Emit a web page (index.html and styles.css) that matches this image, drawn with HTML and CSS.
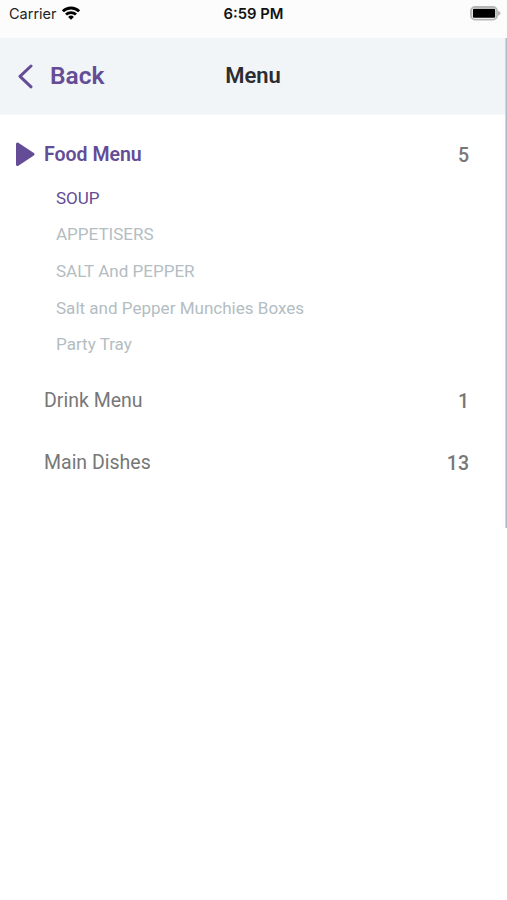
FILE: index.html
```
<!DOCTYPE html>
<html lang="en">
<head>
<meta charset="utf-8">
<title>Menu</title>
<link rel="stylesheet" href="styles.css">
</head>
<body>
<div class="status">
  <div class="carrier"><span>Carrier</span>
    <svg class="wifi" width="18" height="14" viewBox="0 0 18 14"><g fill="none" stroke="#000" stroke-width="2.8"><path d="M.9 5.3a11.6 11.6 0 0 1 16.2 0"/><path d="M4 8.6a7.2 7.2 0 0 1 10 0"/></g><path d="M9 13.8 6.1 10.9a4.2 4.2 0 0 1 5.8 0z"/></svg>
  </div>
  <span class="time">6:59 PM</span>
  <svg class="battery" width="31" height="15" viewBox="0 0 31 15"><rect x="1" y="1" width="26" height="12.6" rx="4" fill="#fff" stroke="#b5b5b5" stroke-width="1.8"/><rect x="2.9" y="2.8" width="22.3" height="9" rx="1.2"/><path d="M28 4.8v5q2.4-.9 2.4-2.5T28 4.8z" fill="#b5b5b5"/></svg>
</div>
<header class="header">
  <a class="back"><svg class="chevron" width="16" height="26" viewBox="0 0 16 26"><path d="M14 3 3 13.3l11 10.5" fill="none" stroke="#644c96" stroke-width="3" stroke-linecap="round" stroke-linejoin="round"/></svg><span>Back</span></a>
  <h1 class="title">Menu</h1>
</header>
<main class="menu">
  <div class="row active">
    <svg class="arrow" width="19" height="26" viewBox="0 0 19 26"><path d="M1.5 3v20.4L17 13.2z" fill="#644c96" stroke="#644c96" stroke-width="3" stroke-linejoin="round"/></svg>
    <span class="name">Food Menu</span><span class="count">5</span>
  </div>
  <ul class="sub">
    <li class="current"><span>SOUP</span></li>
    <li><span>APPETISERS</span></li>
    <li><span>SALT And PEPPER</span></li>
    <li><span>Salt and Pepper Munchies Boxes</span></li>
    <li><span>Party Tray</span></li>
  </ul>
  <div class="row"><span class="name">Drink Menu</span><span class="count">1</span></div>
  <div class="row"><span class="name">Main Dishes</span><span class="count">13</span></div>
</main>
<div class="scrollbar"></div>
</body>
</html>
```
FILE: styles.css
```
* { box-sizing: border-box; }
body {
  margin: 0;
  height: 900px;
  overflow: hidden;
  background: #fff;
  font-family: Roboto, "Liberation Sans", sans-serif;
}
.status {
  display: grid;
  grid-template-columns: 1fr auto 1fr;
  align-items: center;
  height: 38px;
  padding: 0 6px 11px 9px;
  background: #fcfcfc;
  font: 15px/20px Inter, sans-serif;
  color: #111;
}
.carrier { display: flex; align-items: center; gap: 5px; font-size: 14.5px; color: #222; }
.wifi { margin-top: -2px; }
.time { margin-left: -3px; font-size: 14.8px; font-weight: 600; }
.battery { justify-self: end; }
.header {
  display: grid;
  grid-template-columns: 1fr auto 1fr;
  align-items: center;
  height: 77px;
  padding: 0 18px 0 17px;
  background: #f2f5f7;
  border-bottom: 1px solid #f8f9fa;
}
.back {
  display: flex;
  align-items: center;
  gap: 17px;
  color: #644c96;
  font-size: 24.5px;
  line-height: 28px;
  font-weight: 600;
}
.title { margin: 0; font-size: 22px; line-height: 26px; font-weight: 600; color: #2b2d32; }
.menu { padding: 8px 38px 0 16px; }
.row {
  display: flex;
  align-items: center;
  height: 62.5px;
  padding-left: 28px;
  font-size: 19.5px;
  color: #777;
}
.row.active { height: 56.5px; padding: 6px 0 0; gap: 9px; color: #644c96; font-weight: 600; }
.name { flex: 1; }
.count { padding-top: 2px; color: #777; font-weight: 500; }
.sub { height: 189.6px; margin: 0; padding: 0 0 0 40px; list-style: none; }
.sub li { display: flex; align-items: center; height: 36.6px; font-size: 17.05px; color: #b3bdc2; }
.sub .current { color: #644c96; }
.scrollbar { position: absolute; right: 0; top: 38px; width: 2px; height: 490px; background: linear-gradient(90deg, #d3d5e0 50%, #b6b8c8 50%); }
```
